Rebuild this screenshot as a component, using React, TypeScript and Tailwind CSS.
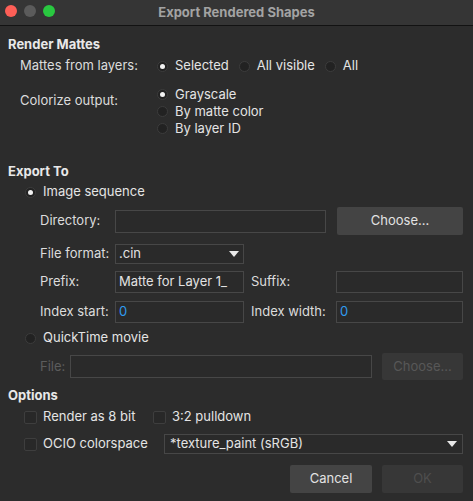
import React from "react";

const font = { fontFamily: "Inter, 'Noto Sans', sans-serif" };

function Radio({ on }: { on?: boolean }) {
  return (
    <span className="flex h-[11px] w-[11px] shrink-0 items-center justify-center rounded-full border border-[#3c3c3c] bg-[#222222]">
      {on && <span className="h-[5px] w-[5px] rounded-full bg-[#f2f2f2]" />}
    </span>
  );
}

function Check() {
  return <span className="h-[13px] w-[13px] shrink-0 rounded-[2px] border border-[#3e3e3e] bg-[#282828]" />;
}

function Caret() {
  return (
    <svg width="10" height="6" viewBox="0 0 10 6" className="shrink-0">
      <path d="M0 0 L10 0 L5 6 Z" fill="#e8e8e8" />
    </svg>
  );
}

function Field({ w, h = "h-[22px]", value, blue }: { w: string; h?: string; value?: string; blue?: boolean }) {
  return (
    <div className={`${w} ${h} flex items-center border border-[#474747] bg-[#2a2a2a] px-[3px] text-[13px] ${blue ? "text-[#2f9bf0]" : "text-[#e2e2e2]"}`}>
      {value}
    </div>
  );
}

export default function App() {
  return (
    <div className="flex h-[501px] w-[473px] flex-col bg-[#2c2c2c] text-[13px] text-[#dcdcdc]" style={font}>
      {/* title bar */}
      <div className="relative flex h-[26px] shrink-0 items-center justify-center border-b border-[#121212] bg-[#353535]">
        <div className="absolute left-[5px] top-[5px] flex gap-[7px]">
          <span className="h-[12px] w-[12px] rounded-full bg-[#fe5f57]" />
          <span className="h-[12px] w-[12px] rounded-full bg-[#5b5b5b]" />
          <span className="h-[12px] w-[12px] rounded-full bg-[#29c840]" />
        </div>
        <span className="text-[13px] font-bold text-[#a3a3a3]">Export Rendered Shapes</span>
      </div>

      <div className="flex flex-col pl-[8px] pr-[10px]">
        {/* Render Mattes */}
        <div className="mt-[10px] h-[16px] leading-[16px] font-bold text-[#e8e8e8]">Render Mattes</div>
        <div className="ml-[12px] mt-[4px] flex h-[20px] items-center">
          <span className="w-[137px]">Mattes from layers:</span>
          <Radio on />
          <span className="ml-[7px] text-[#e4e4e4]">Selected</span>
          <span className="ml-[10px]"><Radio /></span>
          <span className="ml-[7px] text-[#e4e4e4]">All visible</span>
          <span className="ml-[10px]"><Radio /></span>
          <span className="ml-[7px] text-[#e4e4e4]">All</span>
        </div>
        <div className="ml-[12px] mt-[10px] flex">
          <span className="mt-[6px] w-[137px] leading-[16px]">Colorize output:</span>
          <div className="flex flex-col text-[#e4e4e4]">
            {[
              ["Grayscale", true],
              ["By matte color", false],
              ["By layer ID", false],
            ].map(([t, on]) => (
              <div key={t as string} className="flex h-[17px] items-center">
                <Radio on={on as boolean} />
                <span className="ml-[7px]">{t as string}</span>
              </div>
            ))}
          </div>
        </div>

        {/* Export To */}
        <div className="mt-[26px] h-[16px] leading-[16px] font-bold text-[#e8e8e8]">Export To</div>
        <div className="ml-[17px] mt-[4px] flex h-[18px] items-center text-[#e4e4e4]">
          <Radio on />
          <span className="ml-[7px]">Image sequence</span>
        </div>
        <div className="ml-[32px] mt-[6px] flex h-[28px] items-center">
          <span className="w-[75px]">Directory:</span>
          <Field w="w-[211px]" h="h-[23px]" />
          <button className="ml-[11px] h-[28px] flex-1 rounded-[2px] bg-[#444444] text-[#e2e2e2]">Choose...</button>
        </div>
        <div className="ml-[32px] mt-[9px] flex h-[20px] items-center">
          <span className="w-[75px]">File format:</span>
          <div className="flex h-[20px] w-[129px] items-center justify-between border border-[#474747] bg-[#2a2a2a] pl-[3px] pr-[4px] text-[#e2e2e2]">
            <span>.cin</span>
            <Caret />
          </div>
        </div>
        <div className="ml-[32px] mt-[7px] flex h-[22px] items-center">
          <span className="w-[75px]">Prefix:</span>
          <Field w="w-[129px]" value="Matte for Layer 1_" />
          <span className="ml-[7px] w-[85px]">Suffix:</span>
          <Field w="flex-1" />
        </div>
        <div className="ml-[32px] mt-[8px] flex h-[22px] items-center">
          <span className="w-[75px]">Index start:</span>
          <Field w="w-[129px]" value="0" blue />
          <span className="ml-[7px] w-[85px]">Index width:</span>
          <Field w="flex-1" value="0" blue />
        </div>
        <div className="ml-[17px] mt-[6px] flex h-[18px] items-center text-[#e4e4e4]">
          <Radio />
          <span className="ml-[7px]">QuickTime movie</span>
        </div>
        <div className="ml-[32px] mt-[6px] flex h-[27px] items-center">
          <span className="w-[30px] text-[#5c5c5c]">File:</span>
          <Field w="w-[302px]" h="h-[23px]" />
          <button className="ml-[10px] h-[27px] flex-1 rounded-[2px] bg-[#373737] text-[#575757]">Choose...</button>
        </div>

        {/* Options */}
        <div className="mt-[7px] h-[16px] leading-[16px] font-bold text-[#e8e8e8]">Options</div>
        <div className="ml-[16px] mt-[5px] flex h-[18px] items-center text-[#e4e4e4]">
          <Check />
          <span className="ml-[6px] w-[110px]">Render as 8 bit</span>
          <Check />
          <span className="ml-[6px]">3:2 pulldown</span>
        </div>
        <div className="ml-[16px] mt-[8px] flex h-[20px] items-center text-[#e4e4e4]">
          <Check />
          <span className="ml-[6px] w-[121px]">OCIO colorspace</span>
          <div className="flex h-[20px] flex-1 items-center justify-between border border-[#474747] bg-[#2a2a2a] pl-[5px] pr-[5px]">
            <span>*texture_paint (sRGB)</span>
            <Caret />
          </div>
        </div>
        <div className="mt-[11px] flex h-[28px] justify-end gap-[10px]">
          <button className="h-[28px] w-[82px] rounded-[2px] bg-[#444444] text-[#e2e2e2]">Cancel</button>
          <button className="h-[28px] w-[81px] rounded-[2px] bg-[#373737] text-[#4e4e4e]">OK</button>
        </div>
      </div>
    </div>
  );
}
